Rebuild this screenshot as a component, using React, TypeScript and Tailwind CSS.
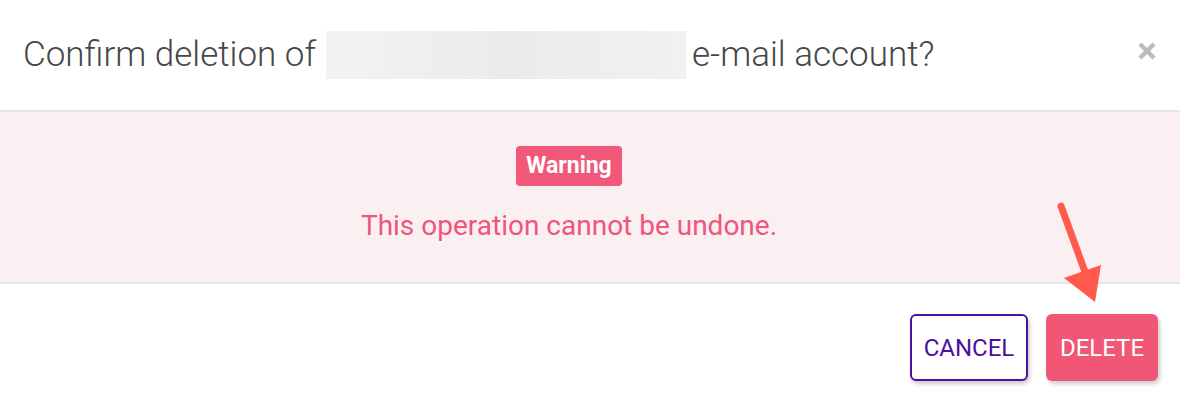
import React from "react";

function CloseIcon() {
  return (
    <svg width="20" height="20" viewBox="0 0 20 20" aria-hidden="true">
      <path
        d="M3 3 L17 17 M17 3 L3 17"
        stroke="#bcbcbc"
        strokeWidth="4.5"
        strokeLinecap="butt"
      />
    </svg>
  );
}

function PointerArrow() {
  return (
    <svg
      className="pointer-events-none absolute left-0 top-0"
      width="1180"
      height="412"
      viewBox="0 0 1180 412"
      aria-hidden="true"
    >
      <path
        d="M1061 206 L1088 280"
        stroke="#ff5a4b"
        strokeWidth="7"
        strokeLinecap="round"
      />
      <path d="M1064 278 L1101 265 L1095 302 Z" fill="#ff5a4b" />
    </svg>
  );
}

export default function App() {
  return (
    <div className="relative h-[412px] w-[1180px] overflow-hidden bg-white font-['Roboto',sans-serif]">
      <header className="flex h-[110px] items-center justify-between pl-[23px] pr-[23px]">
        <h2 className="flex items-center text-[35px] font-light text-[#474747]">
          <span>Confirm deletion of</span>
          <span className="ml-[10px] mr-[6px] inline-block h-[48px] w-[360px] bg-gradient-to-r from-[#f3f3f3] via-[#ebebeb] to-[#f1f1f1]" />
          <span>e-mail account?</span>
        </h2>
        <button type="button" aria-label="Close" className="mt-[-8px]">
          <CloseIcon />
        </button>
      </header>

      <div className="flex h-[174px] flex-col items-center border-y-2 border-[#e6e6e6] bg-[#faf0f1] pr-[42px] pt-[34px]">
        <span className="rounded-[4px] bg-[#f2587a] px-[10px] py-[5px] text-[23px] font-bold leading-[30px] text-white">
          Warning
        </span>
        <p className="mt-[22px] text-[28px] leading-[36px] text-[#f0557a]">
          This operation cannot be undone.
        </p>
      </div>

      <footer className="flex justify-end gap-[18px] pr-[22px] pt-[30px]">
        <button
          type="button"
          className="h-[67px] w-[118px] rounded-[6px] border-2 border-[#4c0f9e] bg-white text-[24px] text-[#4c0f9e] shadow-[2px_3px_4px_rgba(0,0,0,0.2)]"
        >
          CANCEL
        </button>
        <button
          type="button"
          className="h-[67px] w-[112px] rounded-[6px] bg-[#f15677] text-[24px] text-white shadow-[2px_3px_4px_rgba(0,0,0,0.2)]"
        >
          DELETE
        </button>
      </footer>

      <PointerArrow />
    </div>
  );
}
